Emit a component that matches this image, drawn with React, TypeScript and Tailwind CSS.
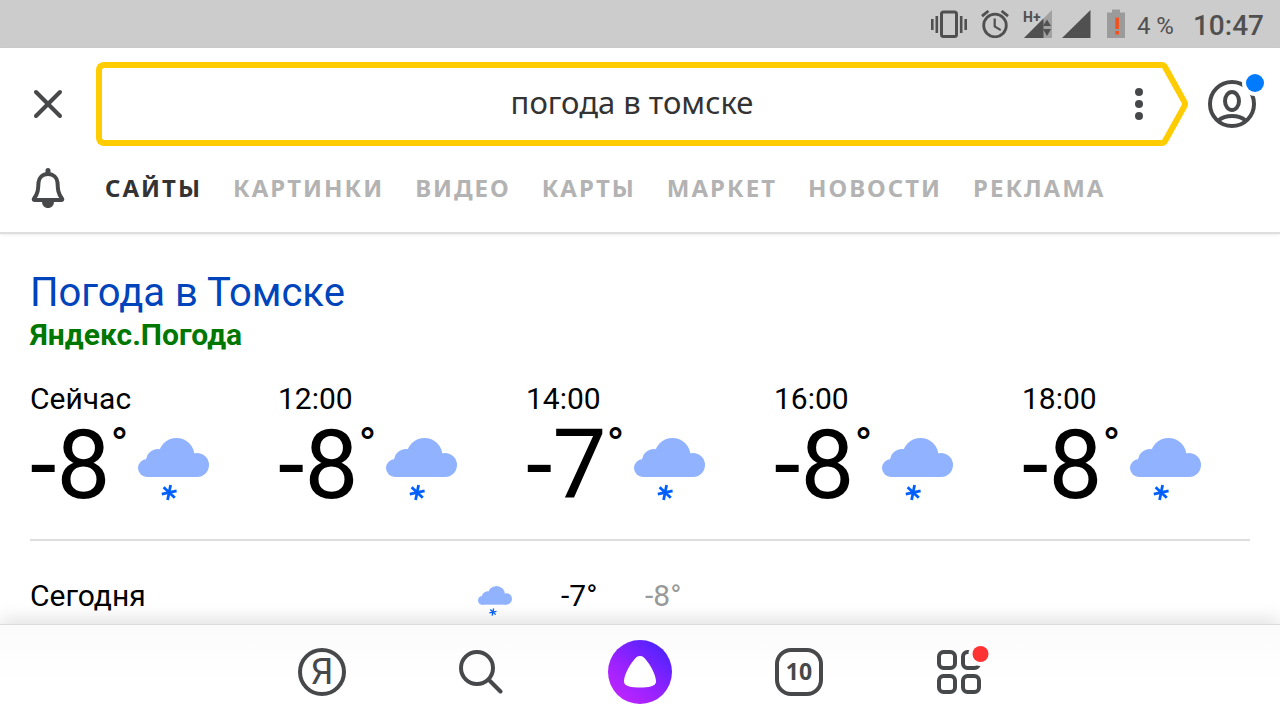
import { X } from "lucide-react";

const tabs = ["Сайты", "Картинки", "Видео", "Карты", "Маркет", "Новости", "Реклама"];

const hours = [
  { time: "Сейчас", temp: "-8" },
  { time: "12:00", temp: "-8" },
  { time: "14:00", temp: "-7" },
  { time: "16:00", temp: "-8" },
  { time: "18:00", temp: "-8" },
];

const SnowCloud = ({ className }: { className: string }) => (
  <svg viewBox="0 0 71 64" className={className} aria-label="Снег" role="img">
    <g fill="#91b3ff">
      <circle cx="9" cy="30" r="9" />
      <circle cx="20" cy="23" r="12" />
      <circle cx="38.5" cy="18" r="18" />
      <circle cx="59" cy="27" r="12" />
      <path d="M9 25H59V39H9Z" />
    </g>
    <g stroke="#0060ff" strokeWidth="2.8">
      <path d="M32.6 47L29.6 62" />
      <path d="M23.8 56.2L38.6 52.8" />
      <path d="M25.6 49.3L36.8 59.8" />
    </g>
  </svg>
);

const StatusBar = () => (
  <div className="flex h-12 shrink-0 items-center justify-end bg-[#cccccc] pr-4 text-[#505050]">
    <div className="flex items-center gap-[14px]">
      <svg width="36" height="28" viewBox="0 0 36 28" fill="currentColor">
        <path d="M0 9h2.6v11H0zM4.5 6h2.6v17H4.5zM28.9 6h2.6v17h-2.6zM33.4 9H36v11h-2.6z" />
        <rect x="10.5" y="2" width="15" height="24.5" rx="2" fill="none" stroke="currentColor" strokeWidth="3" />
      </svg>
      <svg width="28" height="28" viewBox="0 0 28 28" fill="none" stroke="currentColor" strokeWidth="2.8">
        <circle cx="14" cy="15.5" r="11.3" />
        <path d="M13.7 8.5v8l6 3.6" strokeWidth="2.2" />
        <path d="M1 6.2L7.4 1M27 6.2L20.6 1" />
      </svg>
      <svg width="29" height="30" viewBox="0 0 29 30" fill="currentColor">
        <path d="M29 1V29H1Z" opacity=".35" />
        <path d="M20.5 9.5V29H1Z" />
        <path d="M20 17l4-6.5 4 6.5zM20 20h8l-4 7z" />
        <text x="0" y="13" fontSize="14" fontWeight="700" fontFamily="Roboto, sans-serif">
          H+
        </text>
      </svg>
    </div>
    <div className="ml-[10px] flex items-center gap-4">
      <svg width="29" height="30" viewBox="0 0 29 30" fill="currentColor">
        <path d="M28.5 1V29H0Z" />
      </svg>
      <svg width="18" height="30" viewBox="0 0 18 30">
        <path d="M5 0.5h8v3h5V29H0V3.5h5z" fill="#9b9b9b" />
        <path d="M8.3 8.5h3.6v11.5H8.3zM8.3 22h3.6v3.5H8.3z" fill="#f4511e" />
      </svg>
    </div>
    <div className="ml-3 flex items-center gap-[19px] pt-[3px]">
      <span className="text-[24px]">4 %</span>
      <span className="text-[28px] font-medium">10:47</span>
    </div>
  </div>
);

const SearchBox = () => (
  <form className="flex min-w-0 flex-1" onSubmit={(e) => e.preventDefault()}>
    <div className="flex h-[84px] min-w-0 flex-1 items-center rounded-l-[8px] border-y-6 border-l-6 border-[#ffcc00] pl-11">
      <input
        type="text"
        aria-label="Поиск"
        defaultValue="погода в томске"
        className="min-w-0 flex-1 bg-transparent pb-[3px] text-center font-['Noto_Sans',sans-serif] text-[31px] text-[#333333] outline-none"
      />
      <button type="button" aria-label="Ещё" className="flex h-full w-[42px] items-center justify-center">
        <svg width="8" height="32" viewBox="0 0 8 32" fill="#47484a">
          <circle cx="4" cy="4" r="4" />
          <circle cx="4" cy="16" r="4" />
          <circle cx="4" cy="28" r="4" />
        </svg>
      </button>
    </div>
    <svg width="28" height="84" viewBox="0 0 28 84" fill="none" stroke="#ffcc00" strokeWidth="6" className="shrink-0">
      <path d="M0 3H2Q4 3 5.2 5.2L24.2 39.5Q25.8 42 24.2 44.5L5.2 78.8Q4 81 2 81H0" />
    </svg>
  </form>
);

const Header = () => (
  <header className="z-10 shrink-0 border-b-2 border-[#dedede] pt-[14px] shadow-[0_1px_3px_rgba(0,0,0,0.08)]">
    <div className="flex items-center pr-[14px]">
      <button type="button" aria-label="Закрыть" className="flex w-24 shrink-0 justify-center">
        <X size={48} strokeWidth={2} color="#47484a" />
      </button>
      <SearchBox />
      <button type="button" aria-label="Профиль" className="ml-[18px] shrink-0">
        <svg width="60" height="60" viewBox="0 0 60 60" fill="none" stroke="#47484a" strokeWidth="4">
          <circle cx="26" cy="30" r="22" />
          <ellipse cx="26" cy="27" rx="7" ry="9" />
          <path d="M12.5 46.5Q17.5 42 26 42T39.5 46.5" />
          <circle cx="49" cy="9" r="13" fill="#fff" stroke="none" />
          <circle cx="49" cy="9" r="9" fill="#007aff" stroke="none" />
        </svg>
      </button>
    </div>
    <div className="flex h-[86px] items-center pb-[2px]">
      <button type="button" aria-label="Уведомления" className="flex w-24 shrink-0 justify-center">
        <svg width="34" height="40" viewBox="0 0 34 40" fill="none" stroke="#47484a" strokeWidth="4">
          <path
            d="M17 6C11.5 6 8 9.500 7.500 14.500C7.200 21 7 26 3 30.500Q2 32 4 32H30Q32 32 31 30.500C27 26 26.800 21 26.500 14.500C26 9.500 22.500 6 17 6Z"
            strokeLinejoin="round"
          />
          <path d="M17 2.500V5" strokeWidth="5" strokeLinecap="round" />
          <path d="M11 33.500C11 37.500 13.500 40 17 40S23 37.500 23 33.500Z" fill="#47484a" stroke="none" />
        </svg>
      </button>
      <nav className="ml-[9px] flex gap-[31px] font-['Noto_Sans',sans-serif] text-[24px] font-bold tracking-[2px] text-[#b3b3b3] uppercase">
        {tabs.map((tab, i) => (
          <a key={tab} href="#" className={i === 0 ? "text-[#333333]" : ""}>
            {tab}
          </a>
        ))}
      </nav>
    </div>
  </header>
);

const Weather = () => (
  <main className="min-h-0 flex-1 overflow-hidden px-[30px] pt-[33px] text-black">
    <h1 className="text-[40px] leading-[52px] text-[#0044bb]">
      <a href="#">Погода в Томске</a>
    </h1>
    <p className="text-[30px] leading-8 font-bold text-[#007700]">Яндекс.Погода</p>
    <div className="mt-[30px] flex">
      {hours.map((hour) => (
        <div key={hour.time} className="w-[248px] shrink-0">
          <div className="text-[30px] leading-9">{hour.time}</div>
          <div className="flex items-start">
            <span className="text-[96px] leading-[96px]">{hour.temp}</span>
            <span className="text-[48px] leading-[58px]">°</span>
            <SnowCloud className="mt-[21px] ml-[10px] w-[71px]" />
          </div>
        </div>
      ))}
    </div>
    <hr className="mt-[26px] border-t-2 border-[#dedede]" />
    <div className="mt-[37px] flex items-start text-[30px] leading-9">
      <span className="w-[448px]">Сегодня</span>
      <SnowCloud className="mt-2 w-[34px]" />
      <span className="ml-[49px] w-[84px]">-7°</span>
      <span className="text-[#999999]">-8°</span>
    </div>
  </main>
);

const BottomBar = () => (
  <nav className="z-10 flex h-24 shrink-0 items-center justify-center border-t border-[#dcdcdc] bg-linear-to-b from-[#fbfbfb] to-white to-60% pb-[2px] shadow-[0_-6px_16px_rgba(0,0,0,0.11)]">
    <button type="button" aria-label="Яндекс" className="flex w-[159px] justify-center">
      <span className="flex size-12 items-center justify-center rounded-full border-4 border-[#47484a] font-['Roboto',sans-serif] text-[36px] leading-none text-[#47484a]">
        Я
      </span>
    </button>
    <button type="button" aria-label="Найти" className="flex w-[159px] justify-center">
      <svg width="44" height="44" viewBox="0 0 44 44" fill="none" stroke="#47484a" strokeWidth="4" strokeLinecap="round">
        <circle cx="18" cy="18" r="16" />
        <path d="M30 30L41.5 41.5" />
      </svg>
    </button>
    <button type="button" aria-label="Алиса" className="flex w-[159px] justify-center">
      <span className="flex size-16 items-center justify-center rounded-full bg-linear-[40deg,#bf25ff_10%,#9622ff_45%,#4c22ff_90%]">
        <svg width="32" height="32" viewBox="0 0 32 32" fill="#fff">
          <path d="M16 0C19 0 20.5 2 22.5 4.5C26.5 9.5 31.5 18 32 25C32.2 28 30 29.5 27.5 30.2C24 31.2 20 31.5 16 31.5S8 31.2 4.5 30.2C2 29.5-.2 28 0 25C.5 18 5.5 9.5 9.5 4.5C11.5 2 13 0 16 0Z" />
        </svg>
      </span>
    </button>
    <button type="button" aria-label="Вкладки" className="flex w-[159px] justify-center">
      <span className="flex size-12 items-center justify-center rounded-[16px] border-4 border-[#47484a] font-['Noto_Sans',sans-serif] text-[23px] font-bold text-[#47484a]">
        10
      </span>
    </button>
    <button type="button" aria-label="Меню" className="flex w-[159px] justify-center">
      <svg width="60" height="52" viewBox="-5 0 60 52" fill="none" stroke="#47484a" strokeWidth="4" className="overflow-visible">
        <rect x="6" y="6" width="16" height="16" rx="4.5" />
        <rect x="30" y="6" width="16" height="16" rx="4.5" />
        <rect x="6" y="30" width="16" height="16" rx="4.5" />
        <rect x="30" y="30" width="16" height="16" rx="4.5" />
        <circle cx="47.5" cy="8" r="12" fill="#fdfdfd" stroke="none" />
        <circle cx="47.5" cy="8" r="8" fill="#ff3333" stroke="none" />
      </svg>
    </button>
  </nav>
);

const App = () => {
  return (
    <div className="flex h-screen flex-col overflow-hidden bg-white font-['Roboto',sans-serif]">
      <StatusBar />
      <Header />
      <Weather />
      <BottomBar />
    </div>
  );
};

export default App;
